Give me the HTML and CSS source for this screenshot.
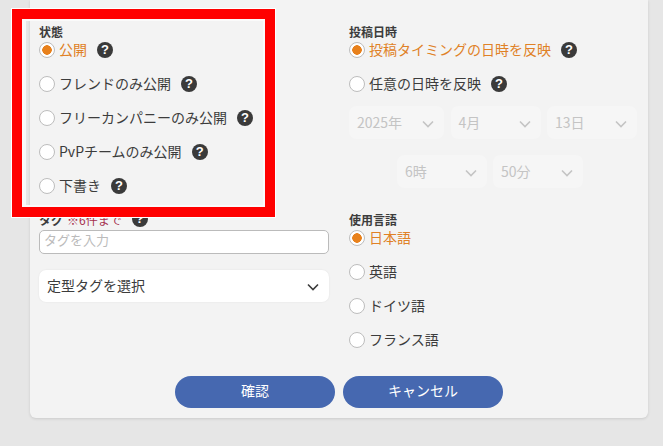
FILE: index.html
```html
<!DOCTYPE html>
<html lang="ja">
<head>
  <meta charset="UTF-8">
  <title>投稿設定</title>
  <link rel="stylesheet" href="styles.css">
</head>
<body>
  <svg class="defs" width="0" height="0">
    <symbol id="chevron" viewBox="0 0 12 8">
      <path d="M1 1.5 L6 6.5 L11 1.5" fill="none" stroke="currentColor" stroke-width="1.6"/>
    </symbol>
  </svg>

  <div class="panel">
    <div class="columns">
      <div class="col">
        <div class="label">状態</div>
        <label class="radio on"><i></i>公開<b class="help">?</b></label>
        <label class="radio"><i></i>フレンドのみ公開<b class="help">?</b></label>
        <label class="radio"><i></i>フリーカンパニーのみ公開<b class="help">?</b></label>
        <label class="radio"><i></i>PvPチームのみ公開<b class="help">?</b></label>
        <label class="radio"><i></i>下書き<b class="help">?</b></label>

        <div class="label tag-label">タグ <span class="note">※6件まで</span><b class="help">?</b></div>
        <div class="tag-input">タグを入力</div>
        <div class="select tag-select">定型タグを選択<svg class="chev"><use href="#chevron"/></svg></div>
      </div>

      <div class="col">
        <div class="label">投稿日時</div>
        <label class="radio on"><i></i>投稿タイミングの日時を反映<b class="help">?</b></label>
        <label class="radio"><i></i>任意の日時を反映<b class="help">?</b></label>
        <div class="dates">
          <div class="select off">2025年<svg class="chev"><use href="#chevron"/></svg></div>
          <div class="select off">4月<svg class="chev"><use href="#chevron"/></svg></div>
          <div class="select off">13日<svg class="chev"><use href="#chevron"/></svg></div>
        </div>
        <div class="times">
          <div class="select off">6時<svg class="chev"><use href="#chevron"/></svg></div>
          <div class="select off">50分<svg class="chev"><use href="#chevron"/></svg></div>
        </div>

        <div class="label lang-label">使用言語</div>
        <label class="radio on"><i></i>日本語</label>
        <label class="radio"><i></i>英語</label>
        <label class="radio"><i></i>ドイツ語</label>
        <label class="radio"><i></i>フランス語</label>
      </div>
    </div>

    <div class="buttons">
      <button class="btn">確認</button>
      <button class="btn">キャンセル</button>
    </div>
  </div>

  <div class="highlight"></div>
</body>
</html>
```

FILE: styles.css
```css
body {
  margin: 0;
  height: 446px;
  overflow: hidden;
  background: #e6e6e6;
  color: #3c3c3c;
  font-family: "Noto Sans CJK JP", "Noto Sans", sans-serif;
  font-size: 14px;
}
.defs {
  position: absolute;
}
.panel {
  box-sizing: border-box;
  width: 618px;
  height: 418px;
  margin-left: 30px;
  padding: 25px 11px 0 9px;
  background: #f3f3f3;
  border-radius: 0 0 6px 6px;
  box-shadow: 0 1px 3px rgba(0, 0, 0, 0.12);
}
.columns {
  display: grid;
  grid-template-columns: 290px 288px;
  column-gap: 20px;
  height: 351px;
}
.label {
  height: 13px;
  font-size: 12px;
  line-height: 13px;
  font-weight: 700;
}
.radio {
  display: flex;
  align-items: flex-start;
  height: 24px;
  margin-bottom: 10px;
  line-height: 22px;
  white-space: nowrap;
}
.radio i {
  box-sizing: border-box;
  flex: none;
  width: 16px;
  height: 16px;
  margin: 4px 4px 0 0;
  background: #fff;
  border: 1px solid #bdbdbd;
  border-radius: 50%;
}
.radio.on {
  color: #e08126;
}
.radio.on i {
  background: radial-gradient(circle, #e8811c 0 4.5px, #fff 5px);
}
.help {
  flex: none;
  display: inline-block;
  width: 16px;
  height: 16px;
  margin: 4px 0 0 10px;
  background: #3a3a3a;
  border-radius: 50%;
  color: #fff;
  font-family: "Liberation Sans", sans-serif;
  font-size: 13px;
  font-weight: 700;
  line-height: 16px;
  text-align: center;
}
.tag-label {
  display: flex;
  align-items: center;
  height: 22px;
  margin-bottom: 0;
}
.note {
  margin-left: 4px;
  color: #a5304d;
  font-weight: 400;
}
.tag-label .help {
  margin: 0 0 0 10px;
}
.tag-input {
  box-sizing: border-box;
  height: 24px;
  padding-left: 4px;
  background: #fff;
  border: 1px solid #bbb;
  border-radius: 5px;
  color: #bbb;
  font-size: 13px;
  line-height: 18px;
}
.select {
  display: flex;
  align-items: center;
  justify-content: space-between;
  box-sizing: border-box;
  background: #fff;
  border-radius: 7px;
  box-shadow: 0 0 2px rgba(0, 0, 0, 0.08);
  line-height: 18px;
}
.tag-select {
  height: 32px;
  margin-top: 16px;
  padding: 0 10px 3px 8px;
}
.tag-select .chev {
  margin-top: 5px;
}
.select.off {
  height: 33px;
  padding: 0 10px 2px 8px;
  background: #f6f6f6;
  box-shadow: none;
  color: #c4c4c4;
}
.chev {
  width: 12px;
  height: 8px;
  margin-top: 4px;
}
.dates {
  display: grid;
  grid-template-columns: 95px 90px 90px;
  column-gap: 6.5px;
  margin-top: 3px;
}
.times {
  display: grid;
  grid-template-columns: 90px 90px;
  column-gap: 6px;
  margin: 16px 0 0 48px;
}
.lang-label {
  margin-top: 25px;
}
.buttons {
  display: flex;
  justify-content: center;
  gap: 8px;
  padding-left: 2px;
}
.btn {
  width: 160px;
  height: 32px;
  padding: 0 0 4px;
  background: #4668b0;
  border: 0;
  border-radius: 16px;
  color: #fff;
  font-family: inherit;
  font-size: 14px;
}
/* annotation frame drawn over the form */
.highlight {
  position: absolute;
  left: 12px;
  top: 9px;
  box-sizing: border-box;
  width: 263px;
  height: 208px;
  border: 10px solid #f00;
  box-shadow: 0 0 0 1px #fff, inset 0 0 0 2px #fafafa, inset 4px 0 0 0 #f8f8f8;
}
```
